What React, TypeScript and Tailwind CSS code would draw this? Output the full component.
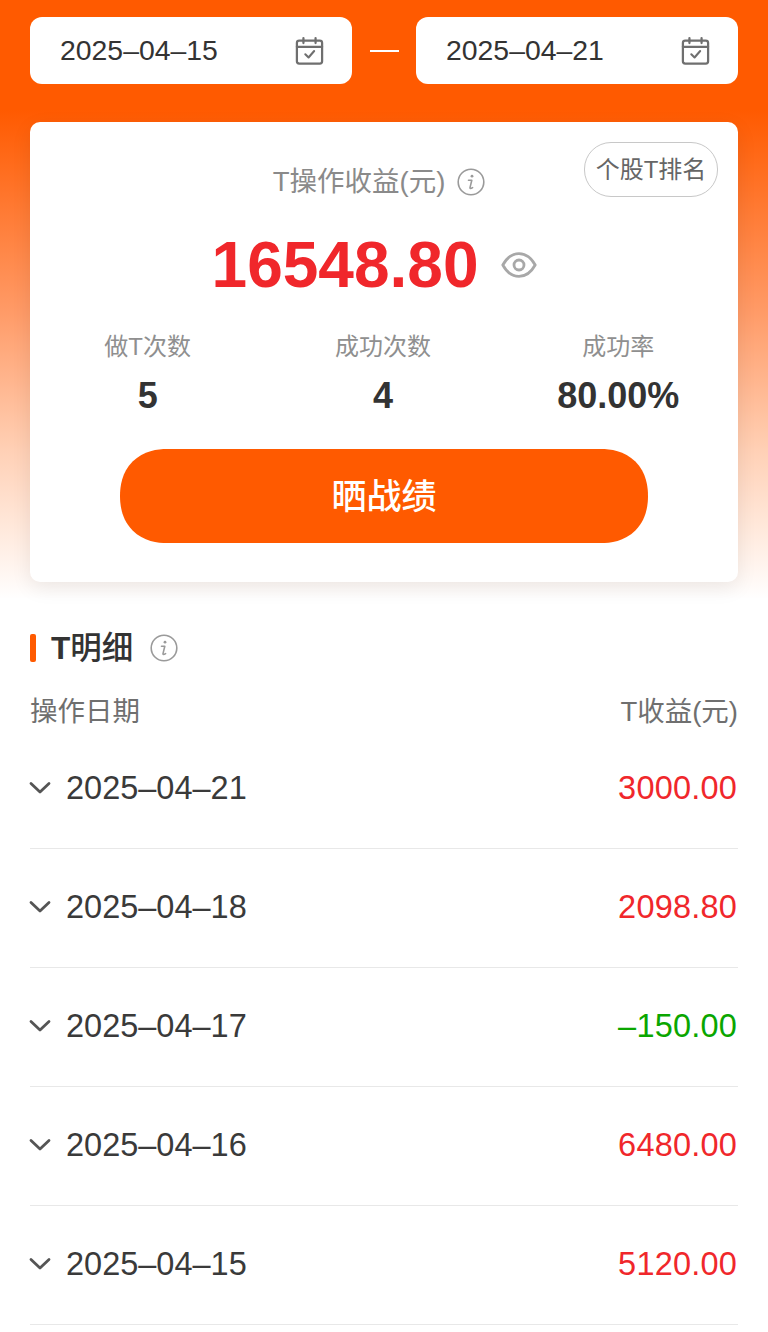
const font = "font-['Liberation_Sans','Noto_Sans_CJK_SC',sans-serif]";

function CalendarIcon() {
  return (
    <svg width="29" height="28" viewBox="0 0 30 30" fill="none" stroke="#6f6f6f" strokeWidth="2.4" strokeLinecap="round" strokeLinejoin="round">
      <rect x="1.5" y="4" width="27" height="24.5" rx="2.5" />
      <path d="M1.5 10.5H28.5M8.5 1.2V6.5M21.5 1.2V6.5" />
      <path d="M10.5 18.5L14 22L20 15" strokeWidth="2.2" />
    </svg>
  );
}

function InfoIcon() {
  return (
    <svg width="28" height="28" viewBox="0 0 28 28" fill="none">
      <circle cx="14" cy="14" r="12.8" stroke="#9a9a9a" strokeWidth="1.6" />
      <circle cx="15" cy="8.2" r="1.4" fill="#9a9a9a" />
      <path d="M11.5 12.2H14.8L13 19.6C12.8 20.6 13.6 20.9 15.6 19.6" stroke="#9a9a9a" strokeWidth="1.6" strokeLinecap="round" strokeLinejoin="round" />
    </svg>
  );
}

function EyeIcon() {
  return (
    <svg width="36" height="26" viewBox="0 0 36 26" fill="none" stroke="#a8a8a8" strokeWidth="2.8">
      <path d="M1.8 13C6 5.5 11.5 1.6 18 1.6C24.5 1.6 30 5.5 34.2 13C30 20.5 24.5 24.4 18 24.4C11.5 24.4 6 20.5 1.8 13Z" strokeLinejoin="round" />
      <circle cx="18" cy="13" r="5" />
    </svg>
  );
}

function Chevron() {
  return (
    <svg width="22" height="14" viewBox="0 0 22 14" fill="none" stroke="#555555" strokeWidth="2.8" strokeLinecap="round" strokeLinejoin="round">
      <path d="M2 2.5L11 11L20 2.5" />
    </svg>
  );
}

function DateBox({ value }: { value: string }) {
  return (
    <div className="flex h-[67px] w-[322px] items-center justify-between rounded-[12px] bg-white pl-[30px] pr-[28px]">
      <span className="text-[28.4px] leading-none text-[#333333]">{value}</span>
      <CalendarIcon />
    </div>
  );
}

function Stat({ label, value }: { label: string; value: string }) {
  return (
    <div className="flex flex-col items-center">
      <span className="text-[24px] leading-[32px] text-[#8f8f8f]">{label}</span>
      <span className="mt-[15px] text-[36px] leading-[36px] font-bold text-[#333333]">{value}</span>
    </div>
  );
}

function Row({ date, amount, color }: { date: string; amount: string; color: string }) {
  return (
    <div className="flex h-[119px] items-center justify-between border-b border-[#e8e8e8] pr-[1px] pb-[2px]">
      <div className="-ml-[1px] flex items-center gap-[15px]">
        <Chevron />
        <span className="text-[32.5px] leading-none text-[#3a3a3a]">{date}</span>
      </div>
      <span className={`text-[32.5px] leading-none tracking-[0.2px] ${color}`}>{amount}</span>
    </div>
  );
}

const rows = [
  { date: "2025–04–21", amount: "3000.00", color: "text-[#f0272b]" },
  { date: "2025–04–18", amount: "2098.80", color: "text-[#f0272b]" },
  { date: "2025–04–17", amount: "–150.00", color: "text-[#0aa600]" },
  { date: "2025–04–16", amount: "6480.00", color: "text-[#f0272b]" },
  { date: "2025–04–15", amount: "5120.00", color: "text-[#f0272b]" },
];

export default function App() {
  return (
    <div className={`h-[1332px] w-[768px] overflow-hidden bg-white ${font}`}>
      <div className="bg-[linear-gradient(180deg,#ff5a00_0px,#ff5a00_110px,#ff9a66_310px,#ffd0b5_450px,#ffffff_600px)] px-[30px] pt-[17px] pb-[16px]">
        <div className="flex items-center justify-between">
          <DateBox value="2025–04–15" />
          <div className="h-[2px] w-[29px] bg-white" />
          <DateBox value="2025–04–21" />
        </div>

        <div className="relative mt-[38px] flex h-[460px] flex-col items-center rounded-[10px] bg-white pt-[43px] shadow-[0_6px_20px_rgba(0,0,0,0.08)]">
          <div className="absolute right-[20px] top-[20px] flex h-[55px] w-[134px] items-center justify-center rounded-[27px] border border-[#c8c8c8] pt-[1px] text-[24px] text-[#666666]">
            个股T排名
          </div>
          <div className="flex items-center gap-[12px] pr-[10px]">
            <span className="text-[27.5px] leading-[34px] text-[#8a8a8a]">T操作收益(元)</span>
            <InfoIcon />
          </div>
          <div className="mt-[33px] flex items-center gap-[23px] pr-[19px]">
            <span className="text-[64px] leading-[66px] font-bold text-[#f0272b]">16548.80</span>
            <EyeIcon />
          </div>
          <div className="mt-[33px] grid w-full grid-cols-3 pr-[2px]">
            <Stat label="做T次数" value="5" />
            <Stat label="成功次数" value="4" />
            <Stat label="成功率" value="80.00%" />
          </div>
          <div className="mt-[35px] flex h-[94px] w-[528px] items-center justify-center rounded-[47px] bg-[#ff5a00] pt-[3px] text-[35px] font-medium text-white [corner-shape:superellipse(1.15)]">
            晒战绩
          </div>
        </div>
      </div>

      <div className="px-[30px]">
        <div className="mt-[30px] flex items-center">
          <div className="h-[28px] w-[6px] rounded-[2px] bg-[#ff5a00]" />
          <span className="ml-[15px] text-[31.5px] leading-[40px] font-medium text-[#333333]"><span className="font-bold">T</span>明细</span>
          <div className="ml-[17px]"><InfoIcon /></div>
        </div>
        <div className="mt-[26px] flex items-center justify-between">
          <span className="text-[27.5px] leading-[36px] text-[#6f6f6f]">操作日期</span>
          <span className="text-[27.5px] leading-[36px] text-[#6f6f6f]">T收益(元)</span>
        </div>
        <div>
          {rows.map((r) => (
            <Row key={r.date} {...r} />
          ))}
        </div>
      </div>
    </div>
  );
}
